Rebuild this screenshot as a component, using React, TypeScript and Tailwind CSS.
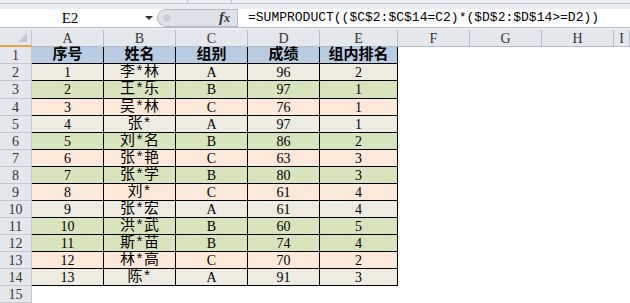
import React from "react";

const rows: [number, string, string, number, number][] = [
  [1, "李*林", "A", 96, 2],
  [2, "王*乐", "B", 97, 1],
  [3, "吴*林", "C", 76, 1],
  [4, "张*", "A", 97, 1],
  [5, "刘*名", "B", 86, 2],
  [6, "张*艳", "C", 63, 3],
  [7, "张*学", "B", 80, 3],
  [8, "刘*", "C", 61, 4],
  [9, "张*宏", "A", 61, 4],
  [10, "洪*武", "B", 60, 5],
  [11, "斯*苗", "B", 74, 4],
  [12, "林*高", "C", 70, 2],
  [13, "陈*", "A", 91, 3],
];

const groupBg: Record<string, string> = {
  A: "bg-[#eeece1]",
  B: "bg-[#d8e4bc]",
  C: "bg-[#fde9d9]",
};

function RowHead({ n }: { n: number | string }) {
  return (
    <div className="w-[32px] shrink-0 h-full flex items-center justify-center pt-[2px] bg-[#e4e7ec] border-r border-b border-[#c3c8cf] text-[14px] leading-none text-[#333] font-['Liberation_Serif',serif]">
      {n}
    </div>
  );
}

function Cell({ w, bg, children, extra }: { w: string; bg: string; children: React.ReactNode; extra?: string }) {
  return (
    <div
      className={`${w} shrink-0 h-full flex items-center justify-center border-r border-b border-black ${bg} text-black leading-none ${
        extra ?? "text-[14px] pt-[2px] font-['Liberation_Serif',serif]"
      }`}
    >
      {children}
    </div>
  );
}

function Blank({ w }: { w: string }) {
  return <div className={`${w} shrink-0 h-full bg-white`} />;
}

export default function App() {
  const cols = ["A", "B", "C", "D", "E", "F", "G", "H", "I"];
  const colW = ["w-[72px]", "w-[72px]", "w-[72px]", "w-[72px]", "w-[78px]", "w-[72px]", "w-[72px]", "w-[72px]", "flex-1"];
  return (
    <div className="w-[630px] h-[303px] overflow-hidden bg-white flex flex-col font-['Liberation_Mono','Noto_Sans_CJK_SC',monospace]">
      {/* top strip */}
      <div className="h-[3px] flex bg-[#eceef1]">
        <div className="w-[188px] border-r border-[#c3c8ce]" />
        <div className="w-[44px] border-r border-[#c3c8ce]" />
        <div className="flex-1" />
      </div>
      <div className="h-[1px] bg-[#c3c8ce]" />
      <div className="h-[5px] bg-[#e9ecf0]" />
      {/* formula bar */}
      <div className="h-[19px] flex bg-white border-b border-[#b9bec6]">
        <div className="w-[140px] flex items-center justify-center text-[15px] text-black pt-[1px] font-['Liberation_Serif',serif]">E2</div>
        <div className="w-[17px] flex items-center justify-center">
          <div className="w-0 h-0 border-l-[4px] border-r-[4px] border-t-[4px] border-l-transparent border-r-transparent border-t-[#333]" />
        </div>
        <div className="w-[80px] flex items-center bg-[#dfe3e8] rounded-l-full border-l border-t border-b border-[#b4bac3]">
          <div className="ml-[4px] w-[10px] h-[10px] rounded-full bg-[#c9ced5] border border-[#eef0f3]" />
          <div className="ml-auto mr-[7px] text-[15px] italic font-bold text-[#333] font-['Liberation_Serif',serif] leading-none">
            f<span className="text-[12px]">x</span>
          </div>
        </div>
        <div className="w-[1px] bg-[#b9bec6]" />
        <div className="flex-1 flex items-center pl-[10px] pt-[1px] text-[13px] text-black whitespace-nowrap">
          =SUMPRODUCT(($C$2:$C$14=C2)*($D$2:$D$14&gt;=D2))
        </div>
      </div>
      <div className="h-[3px] bg-[#e9ecf0]" />
      {/* column headers */}
      <div className="h-[17px] flex bg-[#e4e7ec]">
        <div className="w-[32px] shrink-0 h-full border-r border-[#c3c8cf] border-b-2 border-b-[#e8a33d] flex items-end justify-end pr-[4px] pb-[3px]">
          <svg width="9" height="9" viewBox="0 0 9 9">
            <polygon points="9,0 9,9 0,9" fill="#c4c9d0" />
          </svg>
        </div>
        {cols.map((c, i) => (
          <div
            key={c}
            className={`${colW[i]} shrink-0 h-full flex items-center justify-center pt-[2px] border-r border-b border-[#b6bcc5] text-[14px] leading-none text-[#333] font-['Liberation_Serif',serif]`}
          >
            {c}
          </div>
        ))}
      </div>
      {/* row 1 */}
      <div className="h-[18px] flex">
        <RowHead n={1} />
        {["序号", "姓名", "组别", "成绩", "组内排名"].map((t, i) => (
          <Cell key={t} w={colW[i]} bg="bg-[#b8cce4]" extra="text-[15px] font-bold pt-[1px]">
            {t}
          </Cell>
        ))}
        <Blank w="w-[72px]" />
        <Blank w="w-[72px]" />
        <Blank w="w-[72px]" />
        <Blank w="flex-1" />
      </div>
      {rows.map((r, idx) => {
        const bg = groupBg[r[2]];
        return (
          <div key={idx} className="h-[18px] flex">
            <RowHead n={idx + 2} />
            <Cell w="w-[72px]" bg={bg}>{r[0]}</Cell>
            <Cell w="w-[72px]" bg={bg} extra="text-[15px] pt-[1px]">{r[1]}</Cell>
            <Cell w="w-[72px]" bg={bg}>{r[2]}</Cell>
            <Cell w="w-[72px]" bg={bg}>{r[3]}</Cell>
            <Cell w="w-[78px]" bg={bg}>{r[4]}</Cell>
            <Blank w="w-[72px]" />
            <Blank w="w-[72px]" />
            <Blank w="w-[72px]" />
            <Blank w="flex-1" />
          </div>
        );
      })}
      <div className="h-[18px] flex">
        <RowHead n={15} />
        <Blank w="flex-1" />
      </div>
    </div>
  );
}
